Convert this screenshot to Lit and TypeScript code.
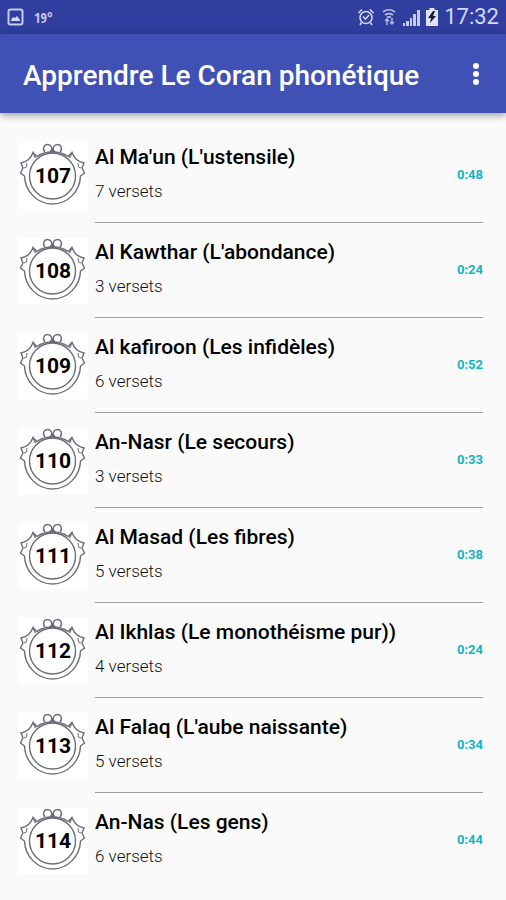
import { LitElement, html, css, svg } from "lit";
import { customElement, property } from "lit/decorators.js";

interface Sura {
  number: number;
  title: string;
  verses: number;
  duration: string;
}

const SURAS: Sura[] = [
  { number: 107, title: "Al Ma'un (L'ustensile)", verses: 7, duration: "0:48" },
  { number: 108, title: "Al Kawthar (L'abondance)", verses: 3, duration: "0:24" },
  { number: 109, title: "Al kafiroon (Les infidèles)", verses: 6, duration: "0:52" },
  { number: 110, title: "An-Nasr (Le secours)", verses: 3, duration: "0:33" },
  { number: 111, title: "Al Masad (Les fibres)", verses: 5, duration: "0:38" },
  { number: 112, title: "Al Ikhlas (Le monothéisme pur))", verses: 4, duration: "0:24" },
  { number: 113, title: "Al Falaq (L'aube naissante)", verses: 5, duration: "0:34" },
  { number: 114, title: "An-Nas (Les gens)", verses: 6, duration: "0:44" },
];

// One side wing of the medallion; the other side is its mirror image.
const wing = svg`
  <path d="M17.500 15 L15 9.500 C13 15 9 19 3 20 L5 25 L2.500 30 L6.500 33 C7 48 19 61 34.500 61"/>
  <path d="M9 20 L8.500 24 L6 25" stroke-width="1"/>
  <path d="M15 9.500 L19 13.500 C23 10.500 28 9 34.500 9"/>`;

@customElement("status-bar")
class StatusBar extends LitElement {
  static styles = css`
    :host {
      display: flex;
      align-items: center;
      height: 34px;
      padding: 0 7px;
      background: #303f9f;
      color: #d3d8f4;
    }
    svg { display: block; flex: none; }
    .temp {
      margin-left: 10px;
      font-size: 14px;
      font-family: "Open Sans Condensed", Roboto, sans-serif;
      color: #c5cbec;
    }
    .right { display: flex; align-items: center; gap: 6px; margin-left: auto; }
    .clock { font-size: 22px; line-height: 36px; }
  `;
  render() {
    return html`
      <svg width="17" height="18" viewBox="0 0 17 18" aria-hidden="true">
        <rect x="1.500" y="1.500" width="14" height="15" rx="2" fill="none" stroke="#c5cbec" stroke-width="2"/>
        <path d="M4 12 L6 9 L8 10 L10 8 L13 12 V13 H4Z" fill="#d3d8f4"/>
      </svg>
      <span class="temp">19°</span>
      <div class="right">
        <svg width="18" height="18" viewBox="0 0 18 18" fill="none" stroke="currentColor" stroke-width="1.600" aria-hidden="true">
          <circle cx="9" cy="9.500" r="6"/>
          <path d="M1.500 5 L5 1.500 M16.500 5 L13 1.500 M4.500 14.500 L3 17 M13.500 14.500 L15 17 M6 8.500 L8.500 11 L12 7"/>
        </svg>
        <svg width="16" height="18" viewBox="0 0 16 18" fill="none" stroke="#b3bbe6" stroke-width="1.600" aria-hidden="true">
          <path d="M2 4 C6 1 10 1 14 4 M4 7 C7 5 9 5 12 7 M6 9.500 C7.500 8.500 8.500 8.500 10 9.500"/>
          <path d="M6 17 V11 M4 13 L6 11 L8 13 M11 10 V16 M9 14 L11 16 L13 14" stroke-width="1.400"/>
        </svg>
        <svg width="17" height="17" viewBox="0 0 17 17" fill="#c5cbec" aria-hidden="true">
          <path d="M0 14h2v3h-2z M3 12h3v5h-3z M7 9h2v8h-2z M10 5h3v12h-3z M14 1h3v16h-3z"/>
        </svg>
        <svg width="12" height="18" viewBox="0 0 12 18" aria-hidden="true">
          <path d="M3.500 0h5v2H12v16H0V2h3.500z" fill="#dfe3fa"/>
          <path d="M7 3 L2 10 H5 L4 15 L10 8 H7 L9 3Z" fill="#151a3a"/>
        </svg>
        <span class="clock">17:32</span>
      </div>
    `;
  }
}

@customElement("sura-row")
class SuraRow extends LitElement {
  @property({ attribute: false }) sura!: Sura;

  static styles = css`
    :host { display: block; }
    .row {
      display: flex;
      align-items: stretch;
      padding: 0 23px 0 18px;
      height: 95px;
      box-sizing: border-box;
    }
    .badge {
      display: grid;
      place-items: center;
      align-self: center;
      flex: none;
      width: 70px;
      height: 66px;
      margin-right: 7px;
      background: #fff;
    }
    .badge > * { grid-area: 1 / 1; }
    .number { font-size: 21px; line-height: 24px; font-weight: 700; color: #000; }
    .content {
      flex: 1;
      min-width: 0;
      display: grid;
      grid-template-columns: 1fr auto;
      align-items: center;
      border-bottom: 1px solid #a0a0a0;
    }
    .text { padding-bottom: 4px; }
    :host(:last-child) .content { border-bottom-color: transparent; }
    h2 { margin: 0; font-size: 21px; line-height: 28px; font-weight: 500; color: #000; }
    p { margin: 8px 0 0; font-size: 17px; line-height: 24px; font-weight: 300; color: #111; }
    time { font-size: 13px; line-height: 18px; font-weight: 700; color: #12b5c6; }
  `;
  render() {
    const { number, title, verses, duration } = this.sura;
    return html`
      <div class="row">
        <div class="badge">
          <svg width="70" height="66" viewBox="0 0 70 66" fill="none" stroke="#6a6e78" stroke-width="1.400" aria-hidden="true">
            <circle cx="34.500" cy="33" r="23"/>
            <g>${wing}</g>
            <g transform="translate(69 0) scale(-1 1)">${wing}</g>
            <path d="M27 9 C24 6 26 1.500 29.500 1.500 C33 1.500 35 5 33 8.500 M42 9 C45 6 43 1.500 39.500 1.500 C36 1.500 34 5 36 8.500"/>
            <path d="M32 9 L34.500 6 L37 9Z" fill="#4a4e58"/>
          </svg>
          <span class="number">${number}</span>
        </div>
        <div class="content">
          <div class="text">
            <h2>${title}</h2>
            <p>${verses} versets</p>
          </div>
          <time>${duration}</time>
        </div>
      </div>
    `;
  }
}

@customElement("app-root")
class AppRoot extends LitElement {
  static styles = css`
    :host {
      display: block;
      min-height: 100vh;
      background: #fafafa;
      font-family: Roboto, sans-serif;
    }
    header {
      display: flex;
      align-items: center;
      justify-content: space-between;
      height: 79px;
      padding: 0 16px 0 23px;
      background: #3f51b5;
      box-shadow: 0 2px 8px rgba(0, 0, 0, 0.4);
    }
    h1 { margin: 0; font-size: 28px; line-height: 36px; font-weight: 500; color: #fff; padding-top: 4px; }
    button {
      display: grid;
      place-items: center;
      width: 28px;
      height: 44px;
      padding: 0;
      border: 0;
      background: none;
      color: #fff;
      cursor: pointer;
    }
    main { padding-top: 15px; }
  `;
  render() {
    return html`
      <status-bar></status-bar>
      <header>
        <h1>Apprendre Le Coran phonétique</h1>
        <button aria-label="Plus d'options">
          <svg width="8" height="24" viewBox="0 0 8 24" fill="currentColor" aria-hidden="true">
            <circle cx="4" cy="4" r="3"/><circle cx="4" cy="12" r="3"/><circle cx="4" cy="20" r="3"/>
          </svg>
        </button>
      </header>
      <main>${SURAS.map((s) => html`<sura-row .sura=${s}></sura-row>`)}</main>
    `;
  }
}
